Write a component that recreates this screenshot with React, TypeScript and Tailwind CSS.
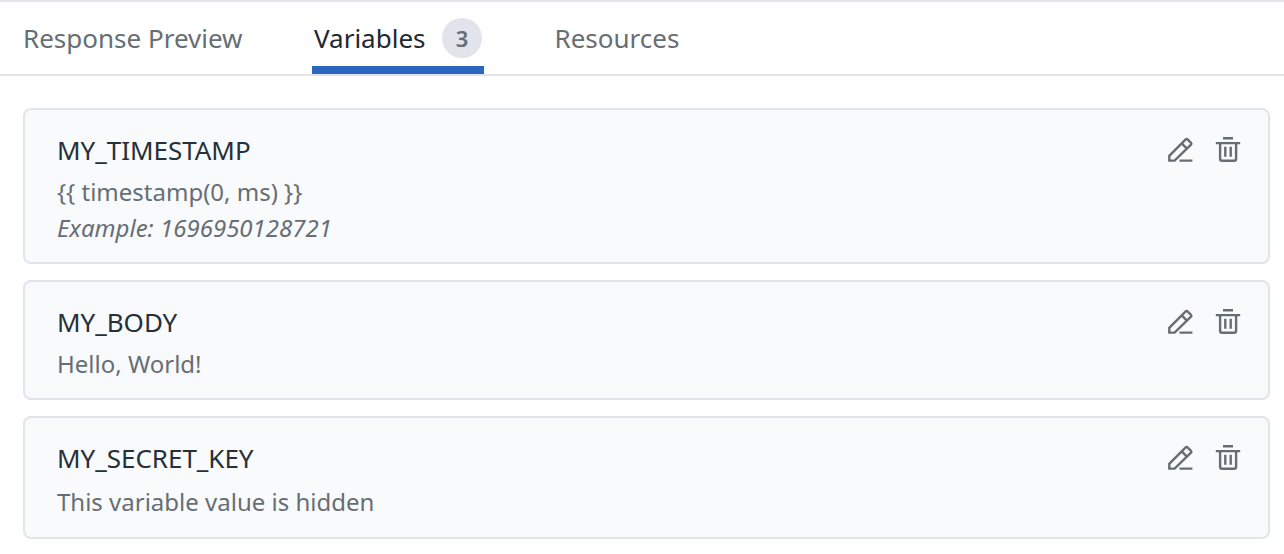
import React from 'react';

type Variable = { name: string; value: string; example?: string; size: string };

const variables: Variable[] = [
  { name: 'MY_TIMESTAMP', value: '{{ timestamp(0, ms) }}', example: 'Example: 1696950128721', size: 'h-[156px]' },
  { name: 'MY_BODY', value: 'Hello, World!', size: 'h-[120px]' },
  { name: 'MY_SECRET_KEY', value: 'This variable value is hidden', size: 'h-[123px] gap-[2px]' },
];

function PencilIcon() {
  return (
    <svg width="32" height="32" viewBox="0 0 32 32" fill="none" stroke="currentColor" strokeWidth="2.4">
      <path d="M5.3 26.6V21.8L21.7 5.3Q22.6 4.4 23.5 5.3L27 8.8Q27.9 9.7 27 10.6L10.6 26.6Z" />
      <path d="M17.7 9.4L22.9 14.6M15.5 26.6H28.4" />
    </svg>
  );
}

function TrashIcon() {
  return (
    <svg width="32" height="32" viewBox="0 0 32 32" fill="none" stroke="currentColor" strokeWidth="2.4">
      <path d="M11 4.2H21M3.8 9.1H28.2M8.1 10V24.7Q8.1 26.7 10.1 26.7H22.1Q24.1 26.7 24.1 24.7V10" />
      <path d="M13.3 12.8V22.7M18.7 12.8V22.7" />
    </svg>
  );
}

function VariableCard({ name, value, example, size }: Variable) {
  return (
    <article className={`flex flex-col rounded-lg border-2 border-[#e1e4eb] bg-[#f9fafc] pt-[22px] pl-8 pr-6 ${size}`}>
      <div className="flex h-[42px] items-start justify-between">
        <h2 className="text-[26px] leading-9 tracking-[-0.03px] text-[#263038]">{name}</h2>
        <div className="flex gap-4 pt-[2px] text-[#666e74]">
          <button aria-label="Edit"><PencilIcon /></button>
          <button aria-label="Delete"><TrashIcon /></button>
        </div>
      </div>
      <p className="text-2xl leading-9">{value}</p>
      {example && <p className="text-2xl leading-9 italic">{example}</p>}
    </article>
  );
}

export default function App() {
  return (
    <main className="h-[554px] overflow-hidden border-t-2 border-[#e1e4e9] bg-white font-['Noto_Sans',sans-serif] text-[#666e74]">
      <nav className="flex h-[74px] border-b-2 border-[#e1e4eb] pl-[23px] text-[26px] leading-[72px]">
        <button className="w-[289px] text-left">Response Preview</button>
        <button className="flex w-[172px] items-center border-b-8 border-[#2c67bf] pt-2 pl-[2px] text-[#1c2932]">
          <span className="w-32 text-left">Variables</span>
          <span className="flex size-10 items-center justify-center rounded-full bg-[#e1e4eb] text-[22px] leading-none font-semibold text-[#666e74]">3</span>
        </button>
        <button className="ml-[70.5px]">Resources</button>
      </nav>
      <section className="flex flex-col gap-4 pt-8 pr-[14px] pl-[23px]">
        {variables.map((variable) => <VariableCard key={variable.name} {...variable} />)}
      </section>
    </main>
  );
}
